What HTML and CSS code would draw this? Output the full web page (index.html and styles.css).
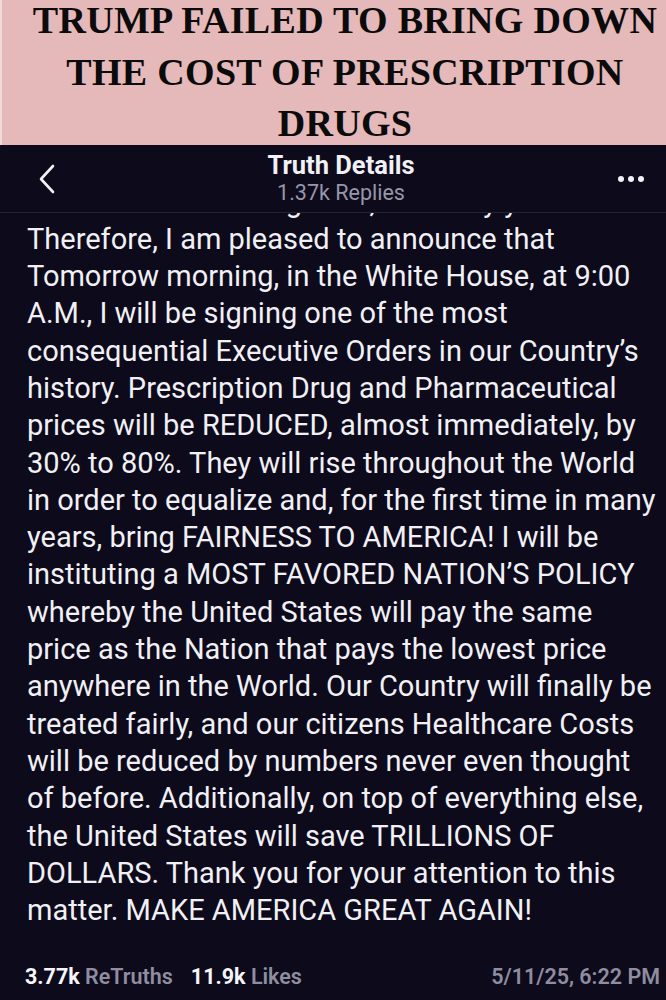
FILE: index.html
```html
<!DOCTYPE html>
<html lang="en">
<head>
  <meta charset="UTF-8">
  <meta name="viewport" content="width=device-width, initial-scale=1.0">
  <title>Truth Details</title>
  <link rel="stylesheet" href="styles.css">
</head>
<body>
  <header class="banner">
    <h1>TRUMP FAILED TO BRING DOWN THE COST OF PRESCRIPTION DRUGS</h1>
  </header>

  <nav class="topbar">
    <button class="icon-btn back" aria-label="Back">
      <svg width="18" height="30" viewBox="0 0 18 30">
        <path d="M15 2 L3 15 L15 28" fill="none" stroke="#f2f1f6" stroke-width="2.6" stroke-linecap="round" stroke-linejoin="round"/>
      </svg>
    </button>
    <div class="topbar-title">
      <h2>Truth Details</h2>
      <p>1.37k Replies</p>
    </div>
    <button class="icon-btn more" aria-label="More">
      <span></span><span></span><span></span>
    </button>
  </nav>

  <main class="feed">
    <p class="post-prev">Democrats have fought for, for many years.</p>
    <p class="post-text">Therefore, I am pleased to announce that Tomorrow morning, in the White House, at 9:00 A.M., I will be signing one of the most consequential Executive Orders in our Country’s history. Prescription Drug and Pharmaceutical prices will be REDUCED, almost immediately, by 30% to 80%. They will rise throughout the World in order to equalize and, for the first time in many years, bring FAIRNESS TO AMERICA! I will be instituting a MOST FAVORED NATION’S POLICY whereby the United States will pay the same price as the Nation that pays the lowest price anywhere in the World. Our Country will finally be treated fairly, and our citizens Healthcare Costs will be reduced by numbers never even thought of before. Additionally, on top of everything else, the United States will save TRILLIONS OF DOLLARS. Thank you for your attention to this matter. MAKE AMERICA GREAT AGAIN!</p>
  </main>

  <footer class="stats">
    <div class="counts">
      <span><b>3.77k</b> ReTruths</span>
      <span><b>11.9k</b> Likes</span>
    </div>
    <time>5/11/25, 6:22 PM</time>
  </footer>
</body>
</html>
```

FILE: styles.css
```css
body {
  margin: 0;
  background-color: #0c0a1b;
  color: #f1f0f5;
  font-family: Roboto, "Liberation Sans", sans-serif;
  height: 1000px;
  display: flex;
  flex-direction: column;
}

.banner {
  background-color: #e5b8b9;
  height: 145px;
  flex-shrink: 0;
  box-sizing: border-box;
  border-left: 2px solid #f3d9d9;
  overflow: hidden;
}
.banner h1 {
  margin: -5px 0 0;
  font-family: "Liberation Serif", "Times New Roman", serif;
  font-weight: bold;
  font-size: 38px;
  line-height: 51.5px;
  letter-spacing: 0.3px;
  color: #0b0b0b;
  text-align: center;
  padding: 0 6px 0 28px;
}

.topbar {
  display: flex;
  align-items: center;
  justify-content: space-between;
  height: 67px;
  flex-shrink: 0;
  padding: 0 22px 0 38px;
  border-bottom: 1px solid #24222f;
  position: relative;
  z-index: 1;
  background-color: #0c0a1b;
}
.icon-btn {
  background: none;
  border: none;
  padding: 0;
  cursor: pointer;
  display: flex;
  align-items: center;
}
.back {
  width: 40px;
  margin-top: 1px;
}
.more {
  width: 40px;
  gap: 4px;
  justify-content: flex-end;
  margin-top: 1px;
}
.more span {
  width: 6px;
  height: 6px;
  border-radius: 50%;
  background-color: #f2f1f6;
}
.topbar-title {
  text-align: center;
  margin-top: -2px;
}
.topbar-title h2 {
  margin: 0;
  font-size: 25.5px;
  font-weight: bold;
  line-height: 30px;
}
.topbar-title p {
  margin: 0;
  font-size: 21.5px;
  line-height: 26px;
  color: #9896a7;
}

.feed {
  flex: 1;
  overflow: hidden;
  padding: 0 6px 0 27px;
  font-size: 29px;
  line-height: 37.3px;
}
.post-prev {
  margin: -29.5px 0 0;
  white-space: nowrap;
}
.post-text {
  margin: 0;
}

.stats {
  display: flex;
  justify-content: space-between;
  align-items: center;
  padding: 0 6px 11px 25px;
  font-size: 21.5px;
  font-weight: 600;
  color: #8f8d9f;
}
.counts {
  display: flex;
  gap: 18px;
}
.counts b {
  color: #f6f5fa;
  font-weight: bold;
}
```
